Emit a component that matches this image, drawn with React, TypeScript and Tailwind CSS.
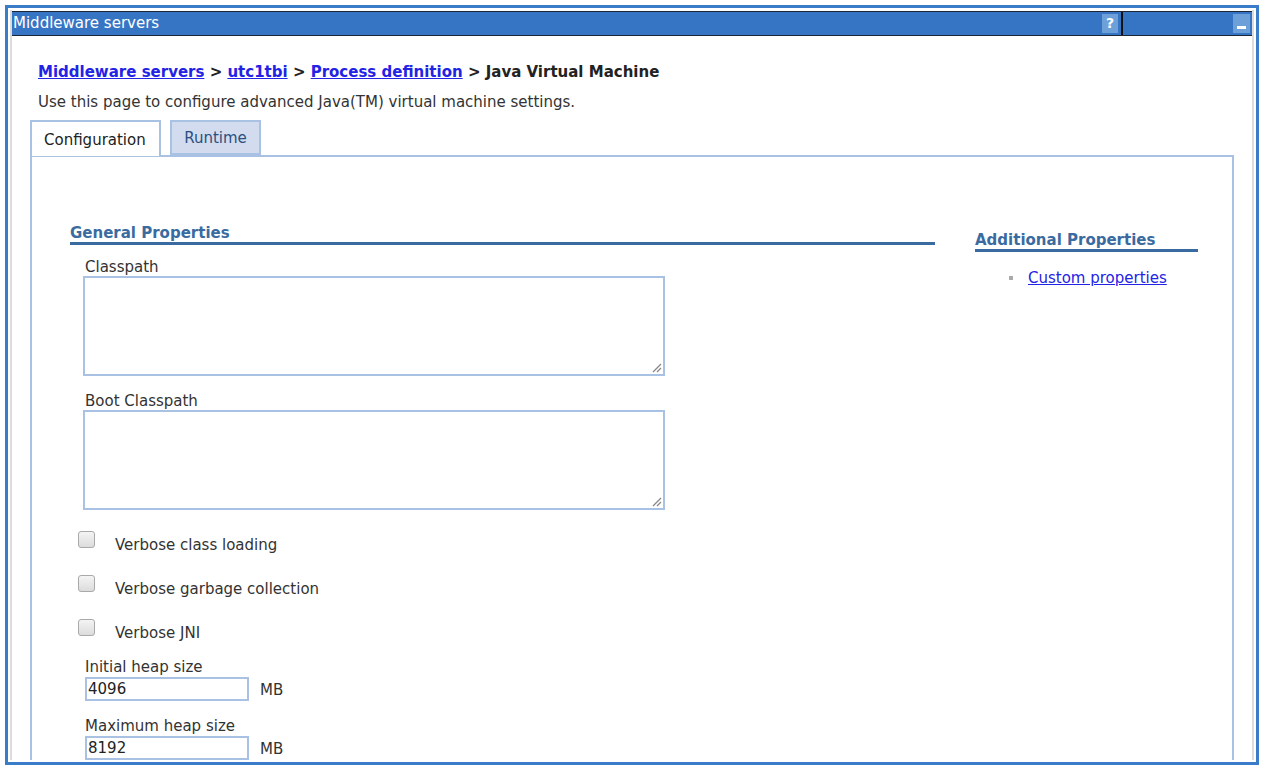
import React from "react";

const font = { fontFamily: '"DejaVu Sans", Verdana, sans-serif' };

function Check({ label }: { label: string }) {
  return (
    <div className="flex items-center h-[44px]">
      <span className="w-[17px] h-[17px] ml-[8px] -mt-[12px] rounded-[3px] border border-[#a9a9a9] bg-gradient-to-b from-[#f4f4f4] to-[#dcdcdc]" />
      <span className="ml-[20px] text-[15px] text-[#333]">{label}</span>
    </div>
  );
}

function Area({ label }: { label: string }) {
  return (
    <div className="ml-[13px]">
      <div className="ml-[2px] text-[15px] text-[#333] leading-[18px]">{label}</div>
      <div className="relative w-[582px] h-[100px] border-2 border-[#a9c2e4] bg-white">
        <svg className="absolute right-[1px] bottom-[1px]" width="12" height="12" viewBox="0 0 12 12">
          <path d="M11 3 L3 11 M11 7 L7 11" stroke="#888" strokeWidth="1.3" />
        </svg>
      </div>
    </div>
  );
}

function Heap({ label, value }: { label: string; value: string }) {
  return (
    <div className="ml-[15px]">
      <div className="text-[15px] text-[#333] leading-[19px]">{label}</div>
      <div className="flex items-center">
        <div className="w-[164px] h-[24px] border-2 border-[#a9c2e4] pl-[1px] text-[15px] text-[#222] leading-[20px]">{value}</div>
        <span className="ml-[11px] text-[15px] text-[#333] mt-[2px]">MB</span>
      </div>
    </div>
  );
}

export default function App() {
  return (
    <div style={font} className="w-[1263px] h-[770px] bg-white pt-[5px] pl-[5px] overflow-hidden">
      <div className="w-[1254px] h-[760px] border-[3px] border-[#3b7cc8] p-[2px]">
        <div className="h-full border-x-2 border-[#dcdcdc] relative overflow-hidden">
          {/* header bar */}
          <div className="-mx-[1px] mt-[1px] h-[25px] bg-[#3675c4] border border-[#1b2636] flex items-center text-white">
            <span className="ml-[1px] text-[15px] leading-none">Middleware servers</span>
            <div className="ml-auto flex h-full items-center">
              <span className="w-[16px] h-[19px] bg-[#6d9fd9] text-white text-[14px] font-bold leading-[19px] text-center">?</span>
              <span className="ml-[3px] w-[2px] h-full bg-[#111]" />
              <span className="ml-[110px] mr-[2px] w-[17px] h-[19px] bg-[#6d9fd9] flex items-end justify-center pb-[4px]">
                <span className="w-[9px] h-[3px] bg-white" />
              </span>
            </div>
          </div>

          <div className="pt-[26px] pl-[26px]">
            <div className="text-[15px] font-bold text-[#222] leading-[20px]">
              <span className="text-[#2323e6] underline">Middleware servers</span>
              {" > "}
              <span className="text-[#2323e6] underline">utc1tbi</span>
              {" > "}
              <span className="text-[#2323e6] underline">Process definition</span>
              {" > Java Virtual Machine"}
            </div>
            <div className="mt-[11px] text-[15px] text-[#333] leading-[18px]">
              Use this page to configure advanced Java(TM) virtual machine settings.
            </div>
          </div>

          <div className="ml-[18px] mr-[18px] mt-[9px]">
            {/* tabs */}
            <div className="flex items-end h-[35px]">
              <div className="w-[131px] h-[36px] -mb-[1px] border-2 border-b-0 border-[#a9c2e4] bg-white relative z-10 flex items-center pl-[12px] pt-[2px] text-[15px] text-[#222]">
                Configuration
              </div>
              <div className="ml-[9px] w-[91px] h-[35px] border-2 border-[#a9c2e4] bg-[#d3dcef] flex items-center justify-center pt-[2px] text-[15px] text-[#2b4f80]">
                Runtime
              </div>
            </div>
            <div className="h-[620px] border-2 border-[#a9c2e4] flex pt-[68px]">
              <div className="ml-[38px] w-[865px]">
                <div className="text-[15px] font-bold text-[#3a6ba0] leading-[17px] border-b-[3px] border-[#3a6ba0]">
                  General Properties
                </div>
                <div className="mt-[13px]">
                  <Area label="Classpath" />
                </div>
                <div className="mt-[16px]">
                  <Area label="Boot Classpath" />
                </div>
                <div className="mt-[13px]">
                  <Check label="Verbose class loading" />
                  <Check label="Verbose garbage collection" />
                  <Check label="Verbose JNI" />
                </div>
                <div className="mt-[3px]">
                  <Heap label="Initial heap size" value="4096" />
                </div>
                <div className="mt-[15px]">
                  <Heap label="Maximum heap size" value="8192" />
                </div>
              </div>
              <div className="ml-[40px] w-[223px] pt-[7px]">
                <div className="text-[15px] font-bold text-[#3a6ba0] leading-[17px] border-b-[3px] border-[#3a6ba0]">
                  Additional Properties
                </div>
                <div className="mt-[17px] flex items-center text-[15px] leading-[18px]">
                  <span className="ml-[34px] w-[4px] h-[4px] bg-[#aaa]" />
                  <span className="ml-[15px] text-[#2323e6] underline">Custom properties</span>
                </div>
              </div>
            </div>
          </div>
        </div>
      </div>
    </div>
  );
}
